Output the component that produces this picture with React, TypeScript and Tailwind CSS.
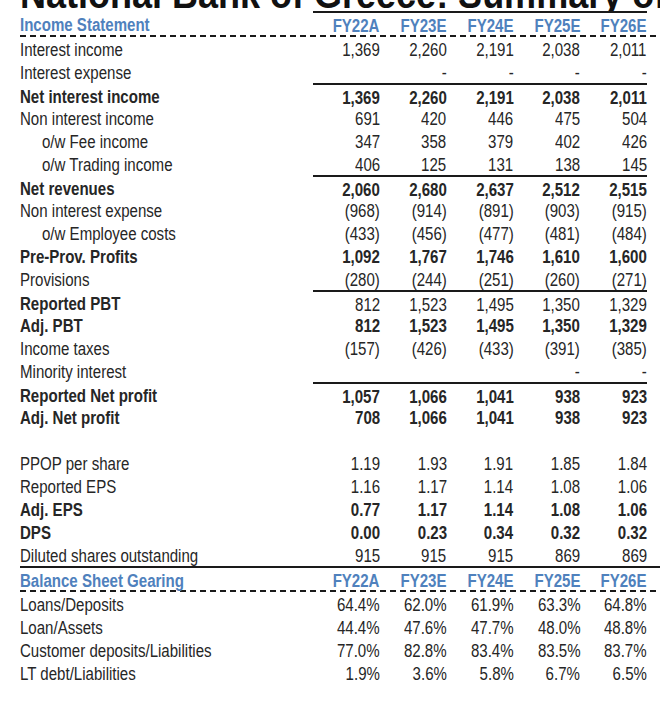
const years = ["FY22A", "FY23E", "FY24E", "FY25E", "FY26E"];

type Row = {
  label: string;
  values?: string[];
  bold?: boolean;
  boldLabel?: boolean;
  indent?: boolean;
  lineAbove?: boolean;
};

const income: Row[] = [
  { label: "Interest income", values: ["1,369", "2,260", "2,191", "2,038", "2,011"] },
  { label: "Interest expense", values: ["", "-", "-", "-", "-"] },
  { label: "Net interest income", values: ["1,369", "2,260", "2,191", "2,038", "2,011"], bold: true, lineAbove: true },
  { label: "Non interest income", values: ["691", "420", "446", "475", "504"] },
  { label: "o/w Fee income", values: ["347", "358", "379", "402", "426"], indent: true },
  { label: "o/w Trading income", values: ["406", "125", "131", "138", "145"], indent: true },
  { label: "Net revenues", values: ["2,060", "2,680", "2,637", "2,512", "2,515"], bold: true, lineAbove: true },
  { label: "Non interest expense", values: ["(968)", "(914)", "(891)", "(903)", "(915)"] },
  { label: "o/w Employee costs", values: ["(433)", "(456)", "(477)", "(481)", "(484)"], indent: true },
  { label: "Pre-Prov. Profits", values: ["1,092", "1,767", "1,746", "1,610", "1,600"], bold: true },
  { label: "Provisions", values: ["(280)", "(244)", "(251)", "(260)", "(271)"] },
  { label: "Reported PBT", values: ["812", "1,523", "1,495", "1,350", "1,329"], boldLabel: true, lineAbove: true },
  { label: "Adj. PBT", values: ["812", "1,523", "1,495", "1,350", "1,329"], bold: true },
  { label: "Income taxes", values: ["(157)", "(426)", "(433)", "(391)", "(385)"] },
  { label: "Minority interest", values: ["", "", "", "-", "-"] },
  { label: "Reported Net profit", values: ["1,057", "1,066", "1,041", "938", "923"], bold: true, lineAbove: true },
  { label: "Adj. Net profit", values: ["708", "1,066", "1,041", "938", "923"], bold: true },
  { label: "" },
  { label: "PPOP per share", values: ["1.19", "1.93", "1.91", "1.85", "1.84"] },
  { label: "Reported EPS", values: ["1.16", "1.17", "1.14", "1.08", "1.06"] },
  { label: "Adj. EPS", values: ["0.77", "1.17", "1.14", "1.08", "1.06"], bold: true },
  { label: "DPS", values: ["0.00", "0.23", "0.34", "0.32", "0.32"], bold: true },
  { label: "Diluted shares outstanding", values: ["915", "915", "915", "869", "869"] },
];

const gearing: Row[] = [
  { label: "Loans/Deposits", values: ["64.4%", "62.0%", "61.9%", "63.3%", "64.8%"] },
  { label: "Loan/Assets", values: ["44.4%", "47.6%", "47.7%", "48.0%", "48.8%"] },
  { label: "Customer deposits/Liabilities", values: ["77.0%", "82.8%", "83.4%", "83.5%", "83.7%"] },
  { label: "LT debt/Liabilities", values: ["1.9%", "3.6%", "5.8%", "6.7%", "6.5%"] },
];

const grid = "grid grid-cols-[293px_repeat(5,66.8px)]";

// the sheet uses a narrow face; squeeze Liberation Sans to match
function Narrow({ children, right }: { children: React.ReactNode; right?: boolean }) {
  return (
    <span className={`inline-block whitespace-nowrap scale-x-[0.86] ${right ? "origin-right" : "origin-left"}`}>
      {children}
    </span>
  );
}

function Dashes() {
  return <div className="h-[2px] w-full bg-[repeating-linear-gradient(90deg,#1a1a1a_0_6px,transparent_6px_10px)]" />;
}

function Header({ title, topLine }: { title: string; topLine: "full" | "cols" }) {
  return (
    <div>
      <div className={`${grid} h-[24px] items-center font-bold text-[#4f81bd] ${topLine === "full" ? "border-t-2 border-[#1a1a1a]" : ""}`}>
        <div className="flex items-center">
          <Narrow>{title}</Narrow>
        </div>
        {years.map((y) => (
          <div key={y} className={`h-full flex items-center justify-end ${topLine === "cols" ? "border-t-2 border-[#1a1a1a]" : ""}`}>
            <Narrow right>{y}</Narrow>
          </div>
        ))}
      </div>
      <Dashes />
    </div>
  );
}

function TableRow({ row }: { row: Row }) {
  return (
    <div className={`${grid} h-[23px]`}>
      <div className={`flex items-center ${row.indent ? "pl-[22px]" : ""} ${row.bold || row.boldLabel ? "font-bold" : ""}`}>
        <Narrow>{row.label}</Narrow>
      </div>
      {(row.values ?? ["", "", "", "", ""]).map((v, i) => (
        <div
          key={i}
          className={`flex items-center justify-end ${row.bold ? "font-bold" : ""} ${row.lineAbove ? "border-t-2 border-[#1a1a1a]" : ""}`}
        >
          <Narrow right>{v}</Narrow>
        </div>
      ))}
    </div>
  );
}

export default function App() {
  return (
    <div className="w-[660px] h-[710px] bg-white overflow-hidden font-['Liberation_Sans',Arial,sans-serif] text-[17.5px] text-[#262626]">
      <div className="h-[11px] overflow-hidden pl-[20px]">
        <div className="-mt-[26px] leading-[40px] text-[40px] font-bold text-[#111]">
          <span className="inline-block whitespace-nowrap origin-left scale-x-[0.9]">National Bank of Greece: Summary of</span>
        </div>
      </div>
      <div className="pl-[20px]">
        <Header title="Income Statement" topLine="cols" />
        {income.map((r, i) => (
          <TableRow key={i} row={r} />
        ))}
        <Header title="Balance Sheet Gearing" topLine="full" />
        {gearing.map((r, i) => (
          <TableRow key={i} row={r} />
        ))}
      </div>
    </div>
  );
}
